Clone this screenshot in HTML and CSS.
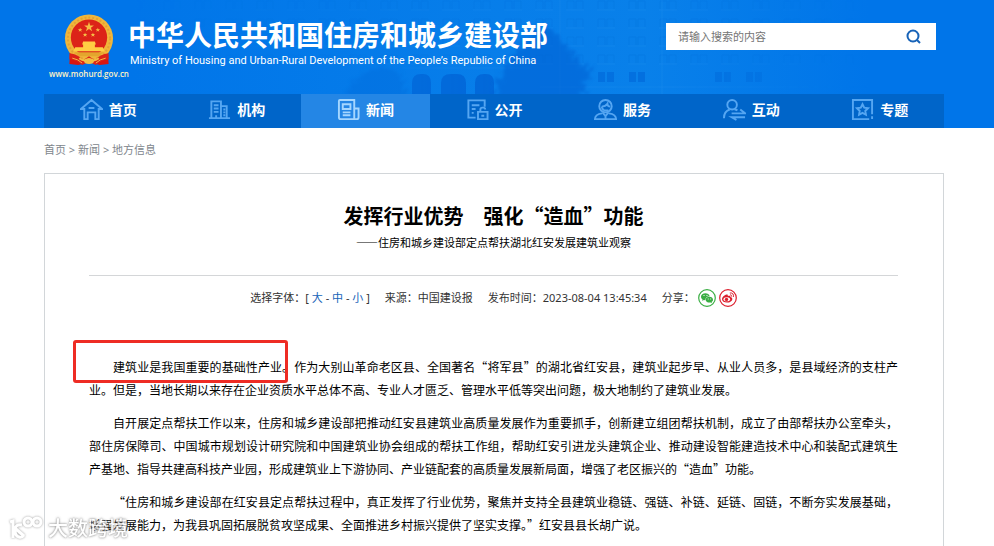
FILE: index.html
```html
<!DOCTYPE html>
<html lang="zh-CN">
<head>
<meta charset="UTF-8">
<meta name="viewport" content="width=device-width, initial-scale=1.0">
<title>发挥行业优势 强化“造血”功能</title>
<link rel="stylesheet" href="styles.css">
</head>
<body>
  <header class="header">
    <!-- faint office building behind the logo -->
    <svg class="header-bg" viewBox="0 0 994 128" preserveAspectRatio="xMinYMin slice" aria-hidden="true">
      <defs>
        <linearGradient id="wall" x1="0" x2="1" y1="0" y2="0">
          <stop offset="0" stop-color="#0b83ea" stop-opacity="0"/>
          <stop offset="0.45" stop-color="#0b83ea" stop-opacity="0.6"/>
          <stop offset="0.7" stop-color="#0b83ea" stop-opacity="0.8"/>
          <stop offset="1" stop-color="#0b83ea" stop-opacity="0"/>
        </linearGradient>
        <linearGradient id="fade" x1="0" x2="1" y1="0" y2="0">
          <stop offset="0" stop-color="#fff" stop-opacity="0"/>
          <stop offset="0.4" stop-color="#fff" stop-opacity="0.6"/>
          <stop offset="0.7" stop-color="#fff" stop-opacity="0.9"/>
          <stop offset="1" stop-color="#fff" stop-opacity="0"/>
        </linearGradient>
        <mask id="fadeMask"><rect x="130" width="740" height="128" fill="url(#fade)"/></mask>
        <pattern id="windows" x="597" y="0" width="31" height="18" patternUnits="userSpaceOnUse">
          <path d="M1 9V1h7v8M10 9V1h7v8" fill="none" stroke="#0068d6" stroke-width="1"/>
          <path d="M0 10h18" stroke="#2a94ee" stroke-width="1"/>
        </pattern>
        <filter id="soft" x="-20%" y="-20%" width="140%" height="140%">
          <feTurbulence type="fractalNoise" baseFrequency="0.2" numOctaves="3" seed="4"/>
          <feDisplacementMap in="SourceGraphic" scale="20" xChannelSelector="R" yChannelSelector="G"/>
          <feGaussianBlur stdDeviation="1.500"/>
        </filter>
      </defs>
      <rect x="130" width="740" height="96" fill="url(#wall)"/>
      <g mask="url(#fadeMask)">
        <rect x="130" width="740" height="68" fill="url(#windows)" opacity="0.3"/>
        <path d="M598 72h7v10h-7zM607 72h7v10h-7zM629 72h7v10h-7zM638 72h7v10h-7zM715 72h7v10h-7zM724 72h7v10h-7zM746 72h7v10h-7zM755 72h7v10h-7z" fill="#0067d8" opacity="0.7"/>
        <path d="M402 68h130M540 87h330M560 0v96M662 0v96" stroke="#2a94ee" fill="none" opacity="0.3"/>
        <path d="M412 96V83q0-9 9-9h2q8 0 8 9v13zM441 96V83q0-9 10-9h6q9 0 9 9v13zM475 96V83q0-9 9-9h2q8 0 8 9v13z" fill="#005fd2"/>
      </g>
      <g filter="url(#soft)" fill="#0561d3" opacity="0.55">
        <path d="M493 104l4-24 14-20 10-16 12-12 14-6 12 10 10 12 8 12 14 10-6 18-6 16z"/>
        <path d="M345 104l6-20 14-12 18-6 16 8 12 30z" opacity="0.5"/>
      </g>
    </svg>

    <div class="header-top">
      <div class="brand">
        <div class="emblem">
          <svg viewBox="0 0 52 54" width="52" height="53" aria-hidden="true">
            <path d="M7 36l-1 15 9 1 11-3 11 3 9-1-1-15z" fill="#d9150f"/>
            <circle cx="26" cy="25" r="24.500" fill="#f0b63a"/>
            <circle cx="26" cy="25" r="21.500" fill="none" stroke="#e3a035" stroke-width="2" stroke-dasharray="2 2"/>
            <circle cx="26" cy="24" r="18.500" fill="#dc2318"/>
            <path d="M26 8l1.200 3.600h3.800l-3 2.300 1.100 3.600-3.100-2.200-3.100 2.200 1.100-3.600-3-2.300h3.800z" fill="#f6bd45"/>
            <path d="M17 14l.6 1.500h1.700l-1.300 1 .5 1.600-1.500-1-1.500 1 .5-1.600-1.300-1h1.700zM35 14l.6 1.500h1.700l-1.300 1 .5 1.600-1.500-1-1.500 1 .5-1.600-1.300-1h1.700zM22 19l.6 1.500h1.700l-1.300 1 .5 1.600-1.500-1-1.500 1 .5-1.600-1.300-1h1.700zM30 19l.6 1.500h1.700l-1.300 1 .5 1.600-1.500-1-1.500 1 .5-1.600-1.300-1h1.700z" fill="#f6bd45"/>
            <path d="M20 28h12l1 3h-1v3h8l2 4H10l2-4h8v-3h-1z" fill="#ffce43"/>
            <path d="M11 39h30l-5 4H16z" fill="#e4a52d"/>
            <path d="M6 40q9 1 14 7l6-4 6 4q5-6 14-7v6q-8 1-13 6l-7-3-7 3q-5-5-13-6z" fill="#dc2318"/>
            <ellipse cx="26" cy="48" rx="5" ry="3" fill="#f3bd42"/>
            <path d="M16 45q5 4 10 1 5 3 10-1" fill="none" stroke="#f3bd42" stroke-width="2"/>
            <path d="M9 45q6 1 10 5M43 45q-6 1-10 5" fill="none" stroke="#f3bd42"/>
          </svg>
          <span class="site-url">www.mohurd.gov.cn</span>
        </div>
        <div class="brand-text">
          <h1>中华人民共和国住房和城乡建设部</h1>
          <p>Ministry of Housing and Urban-Rural Development of the People’s Republic of China</p>
        </div>
      </div>
      <form class="search">
        <input type="text" name="q" placeholder="请输入搜索的内容" aria-label="搜索">
        <button type="submit" aria-label="搜索">
          <svg viewBox="0 0 16 16" width="16" height="16"><circle cx="7" cy="7" r="5.500"/><path d="M11 11l3 3"/></svg>
        </button>
      </form>
    </div>

    <nav class="nav">
      <a href="#">
        <svg viewBox="0 0 24 24"><path d="M1 11.500L12 2l11 9.500h-3.500V22H16v-7H8v7H4.500V11.500zM9 10.500h6"/></svg>
        首页
      </a>
      <a href="#">
        <svg viewBox="0 0 24 24"><path d="M3.500 20.500v-17h10v17M13.500 8.500h6v12M1 21h22M6 7.500h5M6 11h5M6 14.500h5M8.500 21v-3M16 12h2M16 15h2M16 18h2"/></svg>
        机构
      </a>
      <a href="#" class="active">
        <svg viewBox="0 0 24 24"><path d="M3 2h15v20H4q-2 0-2-2V3q0-1 1-1zM18 11h4.500v9q0 2-2 2H18M6 6.500h8v5H6zM6 15h8M6 18h8"/></svg>
        新闻
      </a>
      <a href="#">
        <svg viewBox="0 0 24 24"><path d="M10 20.500H2.500v-18h17V9M6 7.500h8M6 11.500h4M6 15.500h2M12.500 14.500h10v7.500h-10zM15 14.500V12q0-2 2-2h1q2 0 2 2M16 18.500h3"/></svg>
        公开
      </a>
      <a href="#">
        <svg viewBox="0 0 24 24"><circle cx="12" cy="8.500" r="6.500"/><path d="M8 9q4 0 6-3 0 3 3 3M8 9q1 4 4 4h3M9 15l3 4 3-4M8.500 16Q1 17 1 22h22q0-5-7.500-6M12 19v3"/></svg>
        服务
      </a>
      <a href="#">
        <svg viewBox="0 0 24 24"><circle cx="9.500" cy="7" r="5"/><path d="M1 21q0-7 6-9M12 12q2 0 3 1M9 16h14l-5-4M23 20H9l5 3"/></svg>
        互动
      </a>
      <a href="#">
        <svg viewBox="0 0 24 24"><path d="M22 17V2H2v20h17M22 19v3M12 6.500l1.800 3.600 4 .6-2.900 2.800.7 4-3.600-1.900-3.600 1.900.7-4-2.900-2.800 4-.6z"/></svg>
        专题
      </a>
    </nav>
  </header>

  <main class="main">
    <div class="breadcrumb">
      <a href="#">首页</a> &gt; <a href="#">新闻</a> &gt; <a href="#">地方信息</a>
    </div>

    <article class="article">
      <h2>发挥行业优势　强化“造血”功能</h2>
      <p class="subtitle">——住房和城乡建设部定点帮扶湖北红安发展建筑业观察</p>

      <div class="meta">
        <span>选择字体：[ <a href="#">大</a> - <a href="#">中</a> - <a href="#">小</a> ]</span>
        <span>来源：中国建设报</span>
        <span>发布时间：2023-08-04 13:45:34</span>
        <span class="share">
          分享：
          <a href="#" aria-label="微信">
            <svg viewBox="0 0 18 18" width="18" height="18">
              <circle cx="9" cy="9" r="8.300" fill="#fff" stroke="#3aae43" stroke-width="1.200"/>
              <path d="M7.400 4.200c-2.500 0-4.400 1.500-4.400 3.500 0 1.200.6 2.100 1.600 2.800l-.4 1.400 1.600-.9 1.500.2c0-2.500 2-4 4.400-4-.4-1.800-2.200-3-4.300-3z" fill="#3aae43"/>
              <path d="M11.400 7.800c-2.100 0-3.700 1.300-3.700 2.900s1.600 2.900 3.700 2.900l1.200-.2 1.300.8-.3-1.200c.9-.6 1.400-1.400 1.400-2.300 0-1.600-1.600-2.900-3.600-2.900z" fill="#3aae43"/>
              <path d="M5.500 6.500h1M8.500 6.500h1M9.800 10h.8M12.300 10h.8" stroke="#fff"/>
            </svg>
          </a>
          <a href="#" aria-label="微博">
            <svg viewBox="0 0 18 18" width="18" height="18">
              <circle cx="9" cy="9" r="8.300" fill="#fff" stroke="#dc1f2d" stroke-width="1.200"/>
              <path d="M7.500 5.500c1.100-.3 1.600.3 1.300 1.500 1.700-.7 3-.3 2.600 1 1.300.3 1.900 1 1.900 1.900 0 2-2.300 3.700-5.300 3.700-2.800 0-5-1.300-5-3.300 0-1.900 2.300-4.300 4.500-4.800z" fill="#dc1f2d"/>
              <ellipse cx="7.800" cy="10.300" rx="3.300" ry="2" fill="#fff"/>
              <circle cx="7.500" cy="10.400" r="1.700" fill="#dc1f2d"/>
              <path d="M10.800 4c2.800-.5 4.300 1.500 3.500 4M11 5.900c1.200-.2 1.800.5 1.500 1.600" fill="none" stroke="#dc1f2d"/>
            </svg>
          </a>
        </span>
      </div>

      <div class="content">
        <div class="highlight"></div>
        <p>建筑业是我国重要的基础性产业。作为大别山革命老区县、全国著名“将军县”的湖北省红安县，建筑业起步早、从业人员多，是县域经济的支柱产业。但是，当地长期以来存在企业资质水平总体不高、专业人才匮乏、管理水平低等突出问题，极大地制约了建筑业发展。</p>
        <p>自开展定点帮扶工作以来，住房和城乡建设部把推动红安县建筑业高质量发展作为重要抓手，创新建立组团帮扶机制，成立了由部帮扶办公室牵头，部住房保障司、中国城市规划设计研究院和中国建筑业协会组成的帮扶工作组，帮助红安引进龙头建筑企业、推动建设智能建造技术中心和装配式建筑生产基地、指导共建高科技产业园，形成建筑业上下游协同、产业链配套的高质量发展新局面，增强了老区振兴的“造血”功能。</p>
        <p>“住房和城乡建设部在红安县定点帮扶过程中，真正发挥了行业优势，聚焦并支持全县建筑业稳链、强链、补链、延链、固链，不断夯实发展基础，增强发展能力，为我县巩固拓展脱贫攻坚成果、全面推进乡村振兴提供了坚实支撑。”红安县县长胡广说。</p>
      </div>
    </article>
  </main>

  <div class="watermark">
    <svg viewBox="0 0 36 24" width="36" height="24" aria-hidden="true">
      <path d="M2 6l3-1v17M14 9q-7-1-7 5 0 6 4 7 3 1 5-2M8 13l8 7"/>
      <circle cx="20" cy="6" r="4"/>
      <circle cx="29" cy="6" r="4"/>
    </svg>
    <span>大数跨境</span>
  </div>
</body>
</html>
```
FILE: styles.css
```css
* {
  box-sizing: border-box;
}

body {
  margin: 0;
  min-height: 100vh;
  display: flex;
  flex-direction: column;
  font-family: "Noto Sans CJK SC", sans-serif;
  font-size: 12px;
  color: #000;
  background-color: #fff;
}

h1, h2, p {
  margin: 0;
}

a {
  color: inherit;
  text-decoration: none;
}

/* header */
.header {
  position: relative;
  padding: 0 50px 0 44px;
  background-color: #0075e9;
}

.header-bg {
  position: absolute;
  top: 0;
  left: 0;
  width: 100%;
  height: 100%;
}

.header-top {
  position: relative;
  display: flex;
  justify-content: space-between;
  align-items: flex-start;
  height: 94px;
  padding: 14px 8px 0 6px;
}

.brand {
  display: flex;
}

.emblem {
  display: flex;
  flex-direction: column;
  align-items: center;
  width: 78px;
}

.site-url {
  font-family: "Open Sans", sans-serif;
  font-size: 8px;
  font-weight: 600;
  line-height: 14px;
  color: #fff3c4;
}

.brand-text {
  color: #fff;
  white-space: nowrap;
}

.brand-text h1 {
  font-size: 28px;
  font-weight: 700;
  line-height: 40px;
}

.brand-text p {
  padding-left: 2px;
  font-family: Roboto, Arial, sans-serif;
  font-size: 11px;
  line-height: 14px;
}

.search {
  display: flex;
  width: 270px;
  height: 27px;
  margin-top: 9px;
  background-color: #fff;
}

.search input {
  flex: 1;
  min-width: 0;
  padding: 0 12px 2px;
  border: none;
  outline: none;
  background: none;
  font-family: inherit;
  font-size: 11px;
}

.search input::placeholder {
  color: #757575;
}

.search button {
  display: flex;
  justify-content: center;
  align-items: center;
  width: 45px;
  padding: 0;
  border: none;
  background: none;
  cursor: pointer;
}

.search svg {
  fill: none;
  stroke: #1763b8;
  stroke-width: 2;
}

/* navigation */
.nav {
  position: relative;
  display: flex;
  height: 34px;
  background-color: #0065c9;
}

.nav a {
  flex: 1;
  display: flex;
  justify-content: center;
  align-items: center;
  gap: 6px;
  padding-bottom: 4px;
  font-size: 14px;
  font-weight: 700;
  color: #fff;
}

.nav a.active {
  background-color: #2486e5;
}

.nav svg {
  width: 23px;
  height: 23px;
  fill: none;
  stroke: #55a6f2;
  stroke-width: 2;
}

.nav a.active svg {
  stroke: #a4d6ff;
}

/* article */
.main {
  flex: 1;
  display: flex;
  flex-direction: column;
  padding: 0 50px 0 44px;
}

.breadcrumb {
  padding: 12px 0 13px;
  font-family: "Noto Sans", "Noto Sans CJK SC", sans-serif;
  font-size: 11px;
  line-height: 20px;
  color: #80868c;
}

.article {
  flex: 1;
  padding: 26px 45px 6px 44px;
  border: 1px solid #d2d6d9;
  border-bottom: none;
}

.article h2 {
  font-size: 20px;
  font-weight: 700;
  line-height: 32px;
  text-align: center;
}

.subtitle {
  padding-bottom: 23px;
  border-bottom: 1px solid #d4d6d8;
  font-size: 11px;
  line-height: 20px;
  text-align: center;
}

.meta {
  display: flex;
  justify-content: center;
  gap: 15px;
  padding: 12px 0 47px;
  font-family: "Noto Sans", "Noto Sans CJK SC", sans-serif;
  font-size: 11px;
  line-height: 20px;
  color: #333;
}

.meta a {
  color: #1763b8;
}

.share {
  display: flex;
  align-items: center;
  gap: 3px;
}

.share svg {
  display: block;
}

.content {
  position: relative;
  font-size: 12px;
  line-height: 23px;
  text-align: justify;
}

.content p {
  margin-bottom: 10px;
  text-indent: 2em;
}

/* red frame over the first sentence */
.highlight {
  position: absolute;
  top: -15px;
  left: -16px;
  width: 215px;
  height: 43px;
  border: 3px solid #ee2c24;
  border-radius: 3px;
}

.watermark {
  position: fixed;
  left: 8px;
  bottom: 4px;
  display: flex;
  align-items: center;
  gap: 4px;
  color: #fff;
  font-size: 20px;
  font-weight: 500;
  line-height: 28px;
  opacity: 0.8;
  text-shadow: 0 0 2px #777, 0 0 3px #999;
}

.watermark svg {
  fill: none;
  stroke: #fff;
  stroke-width: 3;
  filter: drop-shadow(0 0 1px #888);
}
```
